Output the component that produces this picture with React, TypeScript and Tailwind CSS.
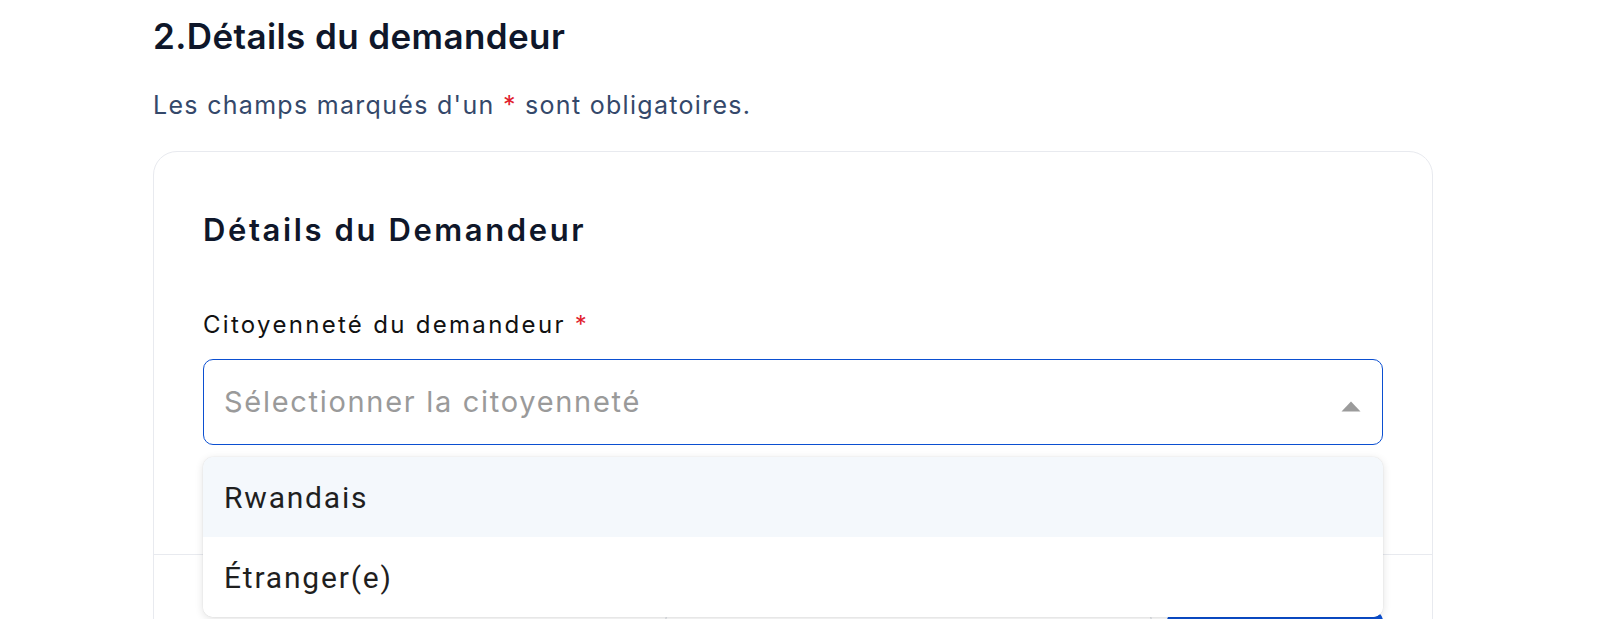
import React from 'react';

const font = { fontFamily: 'Inter, "Noto Sans", sans-serif' };

const options = ['Rwandais', 'Étranger(e)'];

export default function App() {
  return (
    <div className="h-[619px] bg-white overflow-hidden" style={font}>
      <div className="ml-[153px] w-[1280px] pt-[14px]">
        <h1 className="text-[35px] leading-[44px] font-semibold text-[#0f172a] tracking-[0.4px]">
          2.Détails du demandeur
        </h1>
        <p className="mt-[31px] text-[25px] leading-[32px] text-[#34486a] tracking-[1.3px]">
          Les champs marqués d'un <span className="text-[#e11d2e]">*</span> sont obligatoires.
        </p>

        <div className="mt-[30px] rounded-[24px] border border-[#e8eaef] bg-white">
          <div className="px-[49px] pt-[58px] pb-[109px]">
            <h2 className="text-[31px] leading-[40px] font-semibold text-[#0f172a] tracking-[2.6px]">
              Détails du Demandeur
            </h2>
            <label className="mt-[60px] block text-[24px] leading-[30px] text-[#111] tracking-[2.3px]">
              Citoyenneté du demandeur <span className="text-[#e11d2e]">*</span>
            </label>

            <div className="relative mt-[19px]">
              <div className="flex h-[86px] items-center justify-between rounded-[10px] border-[1.5px] border-[#0b4fd1] pl-[20px] pr-[21px]">
                <span className="text-[29px] text-[#9a9a9a] tracking-[1.7px]">Sélectionner la citoyenneté</span>
                <svg width="20" height="11" viewBox="0 0 20 11" className="mt-[8px]">
                  <path d="M10 0.5 L19.5 10.5 L0.5 10.5 Z" fill="#9b9b9b" />
                </svg>
              </div>

              <ul
                className="absolute left-0 right-0 top-[98px] z-10 overflow-hidden rounded-[10px] bg-white shadow-[0_2px_8px_rgba(0,0,0,0.12),0_0_1px_rgba(0,0,0,0.2)]"
                style={{ fontFamily: 'Roboto, "Noto Sans", sans-serif' }}
              >
                {options.map((o, i) => (
                  <li
                    key={o}
                    className={`flex h-[80px] items-center px-[21px] text-[30px] text-[#1f1f1f] tracking-[1.8px] ${
                      i === 0 ? 'bg-[#f4f8fc]' : 'bg-white'
                    }`}
                  >
                    {o}
                  </li>
                ))}
              </ul>
            </div>
          </div>

          <div className="flex items-start justify-end gap-[15px] border-t border-[#e8eaef] px-[49px] pt-[56px] pb-[40px]">
            <button className="h-[56px] w-[487px] rounded-[10px] border border-[#d0d4dc] text-[22px] text-[#111]">
              Enregistrer comme brouillon
            </button>
            <button className="h-[56px] w-[216px] rounded-[10px] bg-[#0b4fd1] text-[22px] text-white">
              Suivant
            </button>
          </div>
        </div>
      </div>
    </div>
  );
}
